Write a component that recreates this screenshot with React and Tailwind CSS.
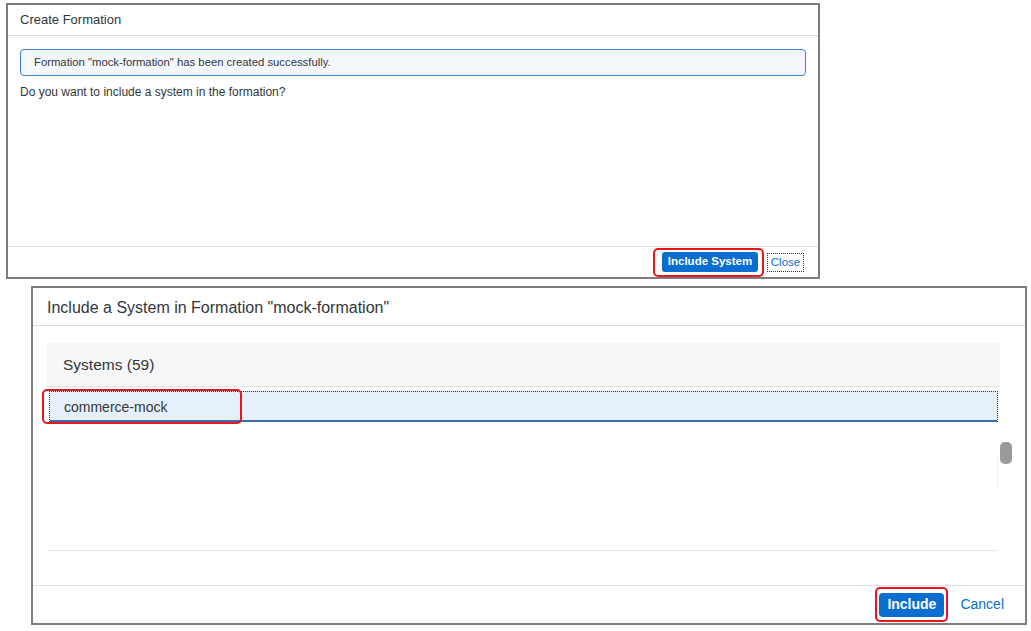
import React from 'react';

const font = { fontFamily: '"Liberation Sans", Arial, sans-serif' };

function Highlight({ className = '', children }) {
  return (
    <div className={`rounded-[5px] border-2 border-[#e8141e] ${className}`}>
      {children}
    </div>
  );
}

function CreateFormationDialog() {
  return (
    <div className="ml-[6px] flex h-[276px] w-[814px] flex-col border-2 border-[#7d7d7d] bg-white">
      <div className="flex h-[31px] shrink-0 items-center border-b border-[#dcdcdc] px-[12px] text-[13px] text-[#32363a] shadow-[0_1px_2px_rgba(0,0,0,0.05)]">
        Create Formation
      </div>
      <div className="flex-1 px-[12px] pt-[13px]">
        <div className="flex h-[27px] items-center rounded-[4px] border border-[#3c82d0] bg-[#f4f8fc] px-[13px] text-[11.3px] text-[#32363a]">
          Formation "mock-formation" has been created successfully.
        </div>
        <p className="mt-[7px] text-[12px] text-[#32363a]">Do you want to include a system in the formation?</p>
      </div>
      <div className="flex h-[31px] shrink-0 items-center justify-end gap-[3px] border-t border-[#e0e0e0] pr-[14px]">
        <Highlight className="flex h-[29px] items-center pl-[7px] pr-[4px]">
          <button className="h-[20px] w-[96px] rounded-[3px] bg-[#0a6ed1] text-[11.5px] font-bold text-white">Include System</button>
        </Highlight>
        <button className="h-[19px] w-[37px] border border-dotted border-[#333] text-[11.5px] text-[#0a6ed1]">Close</button>
      </div>
    </div>
  );
}

function IncludeSystemDialog() {
  return (
    <div className="ml-[31px] mt-[7px] flex h-[339px] w-[996px] flex-col border-2 border-[#7d7d7d] bg-white">
      <div className="flex h-[38px] shrink-0 items-center border-b border-[#dcdcdc] px-[14px] pt-[2px] text-[16px] text-[#32363a]">
        Include a System in Formation "mock-formation"
      </div>
      <div className="relative flex-1 pl-[14px] pr-[25px] pt-[17px]">
        <div className="flex h-[44px] items-center border-b border-[#e5e5e5] bg-[#f7f7f7] pl-[16px] text-[15.5px] text-[#32363a]">
          Systems (59)
        </div>
        <div className="ml-[2px] mr-[2px] mt-[4px] flex h-[31px] items-center border border-b-0 border-dotted border-[#333] bg-[#e5f0fa] pl-[14px] text-[14px] text-[#32363a] shadow-[inset_0_-2px_0_#3d6ea8]">
          commerce-mock
        </div>
        <div className="mr-[2px] mt-[128px] border-b border-[#e8e8e8]" />
        <Highlight className="absolute left-[9px] top-[63px] h-[35px] w-[200px]" />
        <div className="absolute right-[13px] top-[116px] h-[22px] w-[12px] rounded-[5px] bg-[#9a9a9a]" />
        <div className="absolute right-[27px] top-[128px] h-[34px] w-px bg-[#eeeeee]" />
      </div>
      <div className="flex h-[38px] shrink-0 items-center justify-end gap-[12px] border-t border-[#e0e0e0] pr-[21px]">
        <Highlight className="flex h-[35px] w-[73px] items-center justify-center">
          <button className="h-[24px] w-[65px] rounded-[4px] bg-[#0a6ed1] text-[14px] font-bold text-white">Include</button>
        </Highlight>
        <button className="text-[14px] text-[#0a6ed1]">Cancel</button>
      </div>
    </div>
  );
}

export default function App() {
  return (
    <div className="h-[631px] w-[1031px] bg-white pt-[3px]" style={font}>
      <CreateFormationDialog />
      <IncludeSystemDialog />
    </div>
  );
}
